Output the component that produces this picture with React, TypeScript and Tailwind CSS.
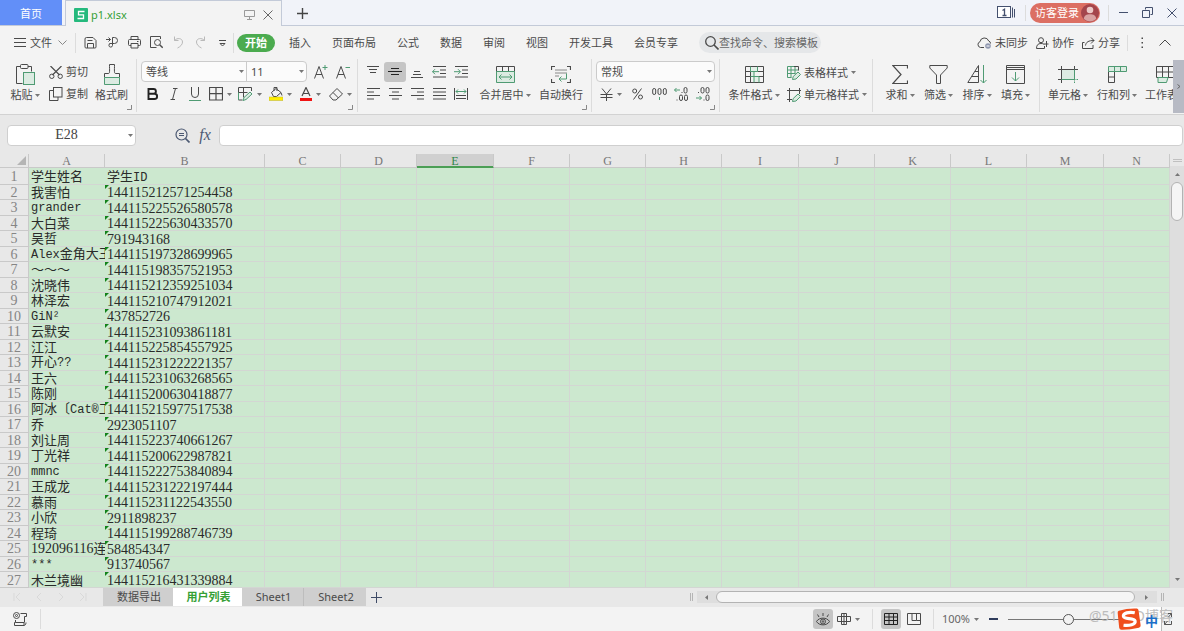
import React from "react";

type Kids = { children?: React.ReactNode };

const G = "#4f9b73";

function Ico({ w, h, children, className = "" }: Kids & { w: number; h: number; className?: string }) {
  return (
    <svg
      width={w}
      height={h}
      viewBox={`0 0 ${w} ${h}`}
      fill="none"
      stroke="currentColor"
      strokeWidth="1"
      className={`shrink-0 ${className}`}
      aria-hidden="true"
    >
      {children}
    </svg>
  );
}

function Caret({ className = "" }: { className?: string }) {
  return (
    <Ico w={5} h={3} className={`text-[#777] ${className}`}>
      <path d="M0 0h5L2.500 3z" fill="currentColor" stroke="none" />
    </Ico>
  );
}

function Sep({ className = "" }: { className?: string }) {
  return <span className={`w-px shrink-0 bg-[#dcdcdc] ${className}`} />;
}

function Corner() {
  return (
    <Ico w={5} h={5} className="absolute bottom-1 right-1 text-[#888]">
      <path d="M4.500 0v4.500H0" />
    </Ico>
  );
}

/* ---------- Title bar ---------- */

function TitleBar() {
  return (
    <header className="flex h-[26px] shrink-0 border-b border-[#c3cad8] bg-[#f1f3f9]">
      <button className="h-[25px] w-[62px] bg-[#628ff8] pt-[2px] text-white">首页</button>
      <div className="-mb-px ml-[3px] flex w-[217px] items-center border-x border-t border-[#c3cad8] bg-[#f3f3f3] pl-2 pr-2 pt-[2px]">
        <Ico w={14} h={14}>
          <rect width="14" height="14" rx="1" fill="#25b97d" stroke="none" />
          <path d="M10.500 3.500h-6v3.300h5v3.700h-6" stroke="#fff" strokeWidth="1.300" />
        </Ico>
        <span className="ml-[3px] flex-1 text-[#35a035]">p1.xlsx</span>
        <Ico w={11} h={11} className="text-[#999]">
          <path d="M.5 1.500h10v6h-10zM5.500 7.500v3M3 10.500h5" />
        </Ico>
        <button aria-label="关闭标签" className="ml-2 text-[#666]">
          <Ico w={10} h={10}>
            <path d="M.5.5l9 9M9.500.5l-9 9" />
          </Ico>
        </button>
      </div>
      <button aria-label="新建" className="flex w-10 items-center justify-center pt-[2px] text-[#444]">
        <Ico w={11} h={11}>
          <path d="M5.500 0v11M0 5.500h11" strokeWidth="1.400" />
        </Ico>
      </button>
      <div className="ml-auto flex items-center text-[#44506e]">
        <Ico w={19} h={13}>
          <rect x=".5" y=".5" width="13" height="11" fill="#fff" />
          <path d="M15.500 1.500v10M17.500 3v8.500" />
          <path d="M5.500 4.500l2-1.300V9.500M5.500 9.500h4" strokeWidth="1.300" />
        </Ico>
        <Sep className="ml-[9px] h-4" />
        <button className="ml-1 flex h-5 w-[70px] items-center justify-between rounded-full bg-[#dc6f63] pl-[5px] pr-px text-white">
          访客登录
          <Ico w={18} h={18}>
            <circle cx="9" cy="9" r="9" fill="#a4454c" stroke="none" />
            <circle cx="9" cy="6" r="3.300" fill="#ecc9c7" stroke="none" />
            <path d="M2.800 15C3 11.500 5.500 10.300 9 10.300s6 1.200 6.200 4.700A9 9 0 0 1 2.800 15z" fill="#d9a3a3" stroke="none" />
          </Ico>
        </button>
        <Sep className="ml-2 h-4" />
        <button aria-label="最小化" className="ml-[9px]">
          <Ico w={11} h={11}><path d="M1 5.500h9" /></Ico>
        </button>
        <button aria-label="还原" className="ml-[13px]">
          <Ico w={11} h={11}><path d="M3.500 2.500v-2h7v7h-2M.5 3.500h7v7h-7z" /></Ico>
        </button>
        <button aria-label="关闭" className="ml-[14px] mr-[7px]">
          <Ico w={10} h={10}><path d="M.5.5l9 9M9.500.5l-9 9" /></Ico>
        </button>
      </div>
    </header>
  );
}

/* ---------- Menu row ---------- */

const quick: { label: string; dim?: boolean; art: React.ReactNode }[] = [
  { label: "保存", art: <path d="M2.500 1.500h6.500l3 3v6.500q0 1-1 1h-9q-1 0-1-1v-8q0-1.500 1.500-1.500zM3.500 12V7.500h6V12M3.500 4.500h5" /> },
  { label: "输出", art: <path d="M0 3.500h4.500M2.500 1.500l2 2-2 2M6.500 1.500h2a3 3 0 0 1 0 6h-5M6.500 1.500v8a1.800 1.800 0 1 1-2-2" /> },
  { label: "打印", art: <path d="M3 3.500v-3h7v3M3 9.500H1.500q-1 0-1-1v-4q0-1 1-1h10q1 0 1 1v4q0 1-1 1H10M3 7.500h7v4.500H3zM9 5.500h1.500" /> },
  { label: "打印预览", art: <><path d="M10.500 3V.5H.5v11h6" /><circle cx="7.500" cy="6.500" r="3" /><path d="M9.700 8.700l3 3" strokeWidth="1.400" /></> },
  { label: "撤销", dim: true, art: <path d="M2.500.5v4h4M2.500 4.500C5 1.500 10.500 2 10.500 6c0 2.500-2 4.500-5 6" /> },
  { label: "恢复", dim: true, art: <path d="M10.500.5v4h-4M10.500 4.500C8 1.500 2.500 2 2.500 6c0 2.500 2 4.500 5 6" /> },
  { label: "自定义", art: <path d="M3 4.500h7M4 7.500h5L6.500 10z" /> },
];

const tabs = ["插入", "页面布局", "公式", "数据", "审阅", "视图", "开发工具", "会员专享"];

function MenuRow() {
  return (
    <nav className="flex h-[33px] shrink-0 items-center">
      <button className="ml-[14px] flex items-center">
        <Ico w={12} h={9}><path d="M0 .5h12M0 4.500h12M0 8.500h12" /></Ico>
        <span className="ml-1">文件</span>
        <Ico w={9} h={5} className="ml-[6px] text-[#888]"><path d="M.5.5l4 4 4-4" /></Ico>
      </button>
      <Sep className="ml-2 mr-[3px] h-5" />
      {quick.map((q) => (
        <button
          key={q.label}
          aria-label={q.label}
          className={`flex w-[22px] justify-center ${q.dim ? "text-[#b9b9b9]" : "text-[#4c4c4c]"}`}
        >
          <Ico w={13} h={13}>{q.art}</Ico>
        </button>
      ))}
      <Sep className="h-5" />
      <button className="ml-[3px] mr-[14px] h-[18px] w-[38px] rounded-full bg-[#4bab4f] font-bold text-white">开始</button>
      <div className="flex gap-[21px] whitespace-nowrap">
        {tabs.map((t) => (
          <button key={t}>{t}</button>
        ))}
      </div>
      <label className="ml-[21px] flex h-[21px] w-[122px] items-center rounded-full bg-[#e5e7e9] pl-[6px]">
        <Ico w={14} h={14}>
          <circle cx="5.500" cy="5.500" r="4.800" strokeWidth="1.300" />
          <path d="M9 9l4.500 4.500" strokeWidth="1.600" />
        </Ico>
        <input
          aria-label="查找"
          placeholder="查找命令、搜索模板"
          className="w-full min-w-0 bg-transparent outline-none placeholder:text-[#666] placeholder:opacity-100"
        />
      </label>
      <div className="ml-auto flex items-center whitespace-nowrap">
        <button className="flex items-center gap-[3px]">
          <Ico w={15} h={12}>
            <path d="M7 10.500H3.500a3 3 0 0 1-.5-5.800A4.500 4.500 0 0 1 11.700 4a2.500 2.500 0 0 1 1.800 2.500" />
            <circle cx="11" cy="9" r="2.800" fill="#9098b0" stroke="none" />
            <path d="M9.500 9h3" stroke="#fff" />
          </Ico>
          未同步
        </button>
        <button className="ml-2 flex items-center gap-[3px]">
          <Ico w={13} h={12}>
            <circle cx="5" cy="3.200" r="2.500" />
            <path d="M.5 11.500C.5 8 2 6.500 5 6.500s3 1 3 1M.5 11.500h8V9M10.500 4v6M7.500 7h5" />
          </Ico>
          协作
        </button>
        <button className="ml-2 flex items-center gap-[3px]">
          <Ico w={13} h={12}>
            <path d="M2.500 5.500h-2v6h10.500V8M3.500 8.500C4 5 6.500 3.500 12 3.500M9 .5l3 3-3 3" />
          </Ico>
          分享
        </button>
        <Sep className="ml-[7px] h-4" />
        <button aria-label="更多" className="ml-[13px]">
          <Ico w={3} h={11}><path d="M.5.5h1.500v1.500H.5zM.5 5h1.500v1.500H.5zM.5 9.500h1.500V11H.5z" fill="currentColor" stroke="none" /></Ico>
        </button>
        <button aria-label="收起功能区" className="ml-[15px] mr-[13px]">
          <Ico w={12} h={7}><path d="M.5 6.500L6 1l5.500 5.500" /></Ico>
        </button>
      </div>
    </nav>
  );
}

/* ---------- Ribbon ---------- */

function Big({ label, caret, width, children }: Kids & { label: string; caret?: boolean; width: string }) {
  return (
    <button className={`-mt-px flex shrink-0 flex-col items-center whitespace-nowrap ${width}`}>
      <span className="flex h-[26px] items-center">{children}</span>
      <span className="flex h-4 items-center gap-[2px]">
        {label}
        {caret && <Caret />}
      </span>
    </button>
  );
}

function Small({ label, active, caret, children, width = "w-[22px]" }: Kids & { label: string; active?: boolean; caret?: boolean; width?: string }) {
  return (
    <button
      aria-label={label}
      className={`flex h-5 shrink-0 items-center justify-center gap-1 rounded-[3px] ${width} ${active ? "bg-[#c5c5c5]" : ""}`}
    >
      {children}
      {caret && <Caret />}
    </button>
  );
}

function Pick({ label, value, className }: { label: string; value: string; className: string }) {
  return (
    <span className={`relative flex items-center ${className}`}>
      <select aria-label={label} className="h-full w-full appearance-none bg-transparent pl-1 outline-none">
        <option>{value}</option>
      </select>
      <Caret className="pointer-events-none absolute right-[2px]" />
    </span>
  );
}

function Ribbon() {
  return (
    <div className="flex h-[56px] shrink-0 border-b border-[#d2d2d2]">
      <div className="flex min-w-0 flex-1 overflow-hidden">
        <section className="relative flex w-[136px] shrink-0 pl-[5px] pt-[3px]">
          <Big label="粘贴" caret width="w-[40px]">
            <Ico w={19} h={21}>
              <path d="M4.500 2.500h-4v17h6M12 2.500h3.500v5" />
              <rect x="4.500" y=".5" width="7.500" height="4" rx="1" />
              <rect x="7.500" y="8.500" width="11" height="12" fill="#dcebe2" stroke={G} />
            </Ico>
          </Big>
          <div className="flex w-[46px] flex-col gap-[2px] pl-1">
            <button className="flex h-5 items-center gap-[3px] whitespace-nowrap">
              <Ico w={14} h={13}>
                <path d="M1.500 0l9 9M12.500 0l-9 9" strokeWidth="1.200" />
                <circle cx="2.800" cy="10.300" r="2.200" /><circle cx="11.200" cy="10.300" r="2.200" />
              </Ico>
              剪切
            </button>
            <button className="flex h-5 items-center gap-[3px] whitespace-nowrap">
              <Ico w={14} h={14}>
                <rect x="4.500" y=".5" width="8.500" height="9.500" />
                <path d="M4.500 3.500h-4v10h8.500v-3.500" />
              </Ico>
              复制
            </button>
          </div>
          <Big label="格式刷" width="w-[41px]">
            <Ico w={16} h={21}>
              <path d="M.5 13.500V9.500h4c1.500 0 1-3 1-9h5c0 6-.5 9 1 9h4v4" />
              <path d="M.5 13.500h15v7H.5z" fill="#dcebe2" stroke={G} />
            </Ico>
          </Big>
          <Corner />
        </section>
        <Sep className="h-[53px]" />

        <section className="relative w-[220px] shrink-0 pl-1 pt-[2px]">
          <div className="flex items-center">
            <div className="mr-[3px] flex h-[21px] w-[166px] rounded-[4px] border border-[#cbcbcb] bg-[#fbfbfb]">
              <Pick label="字体" value="等线" className="w-[105px] border-r border-[#cbcbcb]" />
              <Pick label="字号" value="11" className="flex-1" />
            </div>
            <Small label="增大字号">
              <Ico w={14} h={14}><path d="M.5 13.500l4.500-12 4.500 12M2 9.500h6" /><path d="M11 0v5M8.500 2.500h5" stroke={G} /></Ico>
            </Small>
            <Small label="减小字号">
              <Ico w={14} h={14}><path d="M.5 13.500l4.500-12 4.500 12M2 9.500h6" /><path d="M9.500 2.500h4.500" stroke={G} /></Ico>
            </Small>
          </div>
          <div className="mt-[2px] flex items-center">
            <Small label="加粗"><Ico w={11} h={12}><path d="M1.500 1h5a2.300 2.300 0 0 1 0 4.800h-5zM1.500 5.800h6a2.600 2.600 0 0 1 0 5.200h-6z" stroke="#222" strokeWidth="1.900" /></Ico></Small>
            <Small label="倾斜" width="w-[21px]"><Ico w={8} h={12}><path d="M3 .5h4.500M.5 11.500H5M5.500.5l-3 11" /></Ico></Small>
            <Small label="下划线" width="w-[21px]"><Ico w={12} h={14}><path d="M2.500 0v7a3.500 3.500 0 0 0 7 0V0" /><path d="M0 13.500h12" stroke={G} /></Ico></Small>
            <Small label="边框" caret width="w-[30px]"><Ico w={14} h={14}><path d="M.5.5h13v12.500H.5zM7 .5v12.500M.5 6.700h13" strokeWidth="1.200" /></Ico></Small>
            <Small label="绘制边框" caret width="w-[30px]">
              <Ico w={15} h={14}><path d="M13.500 4V.5H.5V13h4M5.500.5v10M.5 5.500h9" /><path d="M.5 13V5.500M5 13.500l1-3L12 5l2 2-6 5.500z" fill="#dcebe2" stroke={G} /></Ico>
            </Small>
            <Small label="填充颜色" caret width="w-[30px]">
              <Ico w={14} h={14}><path d="M2.500 5.500L7 1.500l5 4-4.500 4h-3zM5 4V.5h3V4M12 5.500l1 3" /><path d="M0 10h14v3.500H0z" fill="#ffef00" stroke="#b9ae30" strokeWidth=".5" /></Ico>
            </Small>
            <Small label="字体颜色" caret width="w-[30px]">
              <Ico w={12} h={14}><path d="M2 9L6 .5 10 9M3.500 6.500h5" strokeWidth="1.200" /><path d="M0 11h12v3H0z" fill="#f01414" stroke="none" /></Ico>
            </Small>
            <Small label="清除" caret width="w-[30px]">
              <Ico w={14} h={13}><path d="M.5 8L8 .5 13.500 6 7 12H4zM4 4.500l5.500 5.500" /></Ico>
            </Small>
          </div>
          <Corner />
        </section>
        <Sep className="h-[53px]" />

        <section className="relative flex w-[233px] shrink-0 pl-1 pt-[3px]">
          <div className="flex w-[110px] flex-wrap content-start gap-y-[2px]">
            <Small label="顶端对齐"><Ico w={12} h={12}><path d="M0 .5h12M2 3.500h8M3 6.500h6" /></Ico></Small>
            <Small label="垂直居中" active><Ico w={14} h={12}><path d="M3 2.500h8M0 5.500h14M3 8.500h8" stroke="#222" /></Ico></Small>
            <Small label="底端对齐"><Ico w={12} h={12}><path d="M3 5.500h6M2 8.500h8M0 11.500h12" /></Ico></Small>
            <Small label="减少缩进"><Ico w={14} h={12}><path d="M1 .5h13M8 4h6M8 7.500h6M1 11h13" /><path d="M7 5.700H.5M3 3.200L.5 5.700 3 8.200" stroke={G} /></Ico></Small>
            <Small label="增加缩进"><Ico w={14} h={12}><path d="M1 .5h13M8 4h6M8 7.500h6M1 11h13" /><path d="M0 5.700h6M4 3.200l2.500 2.500L4 8.200" stroke={G} /></Ico></Small>
            <Small label="左对齐"><Ico w={13} h={12}><path d="M0 .5h13M0 4h7M0 7.500h13M0 11h7" /></Ico></Small>
            <Small label="居中"><Ico w={13} h={12}><path d="M0 .5h13M3 4h7M0 7.500h13M3 11h7" /></Ico></Small>
            <Small label="右对齐"><Ico w={13} h={12}><path d="M0 .5h13M6 4h7M0 7.500h13M6 11h7" /></Ico></Small>
            <Small label="两端对齐"><Ico w={13} h={12}><path d="M0 .5h13M0 4h13M0 7.500h13M0 11h13" /></Ico></Small>
            <Small label="分散对齐"><Ico w={14} h={12}><path d="M.5 0v12M13.500 0v12M2 7.500h10M2 10.500h10" /><path d="M2 3.500h10M4 1.500l-2 2 2 2M10 1.500l2 2-2 2" stroke={G} /></Ico></Small>
          </div>
          <Big label="合并居中" caret width="w-[66px]">
            <Ico w={19} h={17}>
              <path d="M.5 7V.5h18V7M6.500.5v5M12.500.5v5" />
              <path d="M.5 5.500h18v11H.5z" fill="#dcebe2" stroke={G} />
              <path d="M3 11h13M5.500 8.500L3 11l2.500 2.500M13.500 8.500L16 11l-2.500 2.500" stroke={G} />
            </Ico>
          </Big>
          <Big label="自动换行" width="w-[46px]">
            <Ico w={20} h={17}>
              <path d="M.5 4V.5H4M16 .5h3.500V4M.5 13v3.500H4M16 16.500h3.500V13" strokeWidth="1.200" />
              <path d="M4 4h12M4 7h12M4 10h4" stroke="#888" />
              <path d="M15.500 7.500V13H8M10.500 10.500L8 13l2.500 2.500" stroke={G} />
            </Ico>
          </Big>
          <Corner />
        </section>
        <Sep className="h-[53px]" />

        <section className="relative w-[127px] shrink-0 pl-1 pt-[2px]">
          <div className="flex h-[21px] w-[119px] rounded-[4px] border border-[#cbcbcb] bg-[#fbfbfb]">
            <Pick label="数字格式" value="常规" className="flex-1" />
          </div>
          <div className="mt-[2px] flex items-center">
            <Small label="货币" caret width="w-[30px]"><Ico w={13} h={13}><path d="M2 .5l4.500 5.500L11 .5M6.500 6v7M.5 6.500h12M.5 9.500h12" /></Ico></Small>
            <Small label="百分比"><Ico w={11} h={12}><path d="M9.500.5l-8 11" /><circle cx="2.700" cy="3" r="2" /><circle cx="8.500" cy="9" r="2" /></Ico></Small>
            <Small label="千位分隔"><Ico w={15} h={13}><rect x=".7" y=".5" width="3" height="6" rx="1.500" /><rect x="6" y=".5" width="3" height="6" rx="1.500" /><rect x="11.300" y=".5" width="3" height="6" rx="1.500" /><path d="M7.500 9v3" stroke={G} /></Ico></Small>
            <Small label="增加小数位"><Ico w={14} h={14}><path d="M6 3H.5M2.500 1L.5 3l2 2" stroke={G} /><rect x="10" y=".5" width="3" height="5.500" rx="1.500" /><rect x="5.500" y="8" width="3" height="5.500" rx="1.500" /><rect x="10.500" y="8" width="3" height="5.500" rx="1.500" /><path d="M8 5v1M3 12.500v1" /></Ico></Small>
            <Small label="减少小数位"><Ico w={14} h={14}><path d="M0 11h5.500M3.500 9l2 2-2 2" stroke={G} /><rect x="5" y=".5" width="3" height="5.500" rx="1.500" /><rect x="10" y=".5" width="3" height="5.500" rx="1.500" /><rect x="10" y="8" width="3" height="5.500" rx="1.500" /><path d="M2.500 5v1M8 12.500v1" /></Ico></Small>
          </div>
          <Corner />
        </section>
        <Sep className="h-[53px]" />

        <section className="flex w-[152px] shrink-0 pl-1 pt-[3px]">
          <Big label="条件格式" caret width="w-[60px]">
            <Ico w={19} h={17}>
              <path d="M6.500.5h6v5h-6zM5 5.500h4v5H5zM9 10.500h5v6H9z" fill="#e3f0e8" stroke="none" />
              <path d="M.5.5h18v16H.5zM.5 5.500h5M12.500 5.500h6M.5 10.500h5M14 10.500h4.500M5.500 5.500v11" />
              <path d="M5.500.5v5h7V.5M9 5.500v5h5v6M5.500 10.500H9v6" stroke={G} />
            </Ico>
          </Big>
          <div className="flex flex-col gap-px pl-[3px]">
            <button className="flex h-[21px] items-center gap-[3px] whitespace-nowrap">
              <Ico w={14} h={14}>
                <path d="M.5 11.500V.5h8M.5 4h11M4 .5v11M8 .5v7M.5 7.500h8M.5 11.500h4" stroke={G} />
                <path d="M7 .5h4.500v4" />
                <path d="M5.500 13.500l.7-3L11 6l2.500 2.500L9 13z" fill="#dcebe2" stroke={G} />
              </Ico>
              表格样式<Caret />
            </button>
            <button className="flex h-[21px] items-center gap-[3px] whitespace-nowrap">
              <Ico w={14} h={14}>
                <path d="M0 2.500h14M2.500 0v14M12.500 0v6M0 11.500h5" />
                <path d="M5.500 13.500l.7-3L11 6l2.500 2.500L9 13z" fill="#dcebe2" stroke={G} />
              </Ico>
              单元格样式<Caret />
            </button>
          </div>
        </section>
        <Sep className="h-[53px]" />

        <section className="flex w-[166px] shrink-0 pl-2 pt-[3px]">
          <Big label="求和" caret width="w-[38px]">
            <Ico w={16} h={19}><path d="M15.500 3.500V.5H.8L9 9.500.8 18.500h14.700v-3" strokeWidth="1.200" /></Ico>
          </Big>
          <Big label="筛选" caret width="w-[39px]">
            <Ico w={19} h={19}><path d="M.8.5h17.400v2.500L11.500 10v8.500h-4V10L.8 3z" /></Ico>
          </Big>
          <Big label="排序" caret width="w-[38px]">
            <Ico w={20} h={19}><path d="M.8 17.500L11.500.5v17zM8 6.500h3.500M5 11.500h6.500" /><path d="M16.500 0v18M13.500 15l3 3 3-3" stroke={G} /></Ico>
          </Big>
          <Big label="填充" caret width="w-[39px]">
            <Ico w={19} h={19}><path d="M.5.5h18v18H.5zM.5 4.500h18M.5 2.500h18" /><path d="M9.500 7v9M6 12.500L9.500 16l3.500-3.500" stroke={G} /></Ico>
          </Big>
        </section>
        <Sep className="h-[53px]" />

        <section className="flex shrink-0 pl-[3px] pt-[3px]">
          <Big label="单元格" caret width="w-[50px]">
            <Ico w={20} h={17}>
              <path d="M3.500 3.500h13v10h-13z" fill="#dcebe2" stroke={G} />
              <path d="M0 3.500h20M3.500 0v17M0 13.500h3.500M16.500 0v3.500" /><path d="M3.500 13.500h16.500M16.500 3.500V17" stroke={G} strokeDasharray="2 1" />
            </Ico>
          </Big>
          <Big label="行和列" caret width="w-[48px]">
            <Ico w={19} h={17}>
              <path d="M.5 5.500h6v11h-6zM.5 11h6" /><path d="M.5.5h18v5H.5zM6.500.5v5M12.500.5v5" fill="#dcebe2" stroke={G} />
            </Ico>
          </Big>
          <Big label="工作表" caret width="w-[48px]">
            <Ico w={19} h={17}>
              <path d="M.5.5h18v11H.5zM.5 6h18M6.500.5v11M12.500.5v11" /><path d="M2 11.500h10l-1.500 5H2z" fill="#dcebe2" stroke={G} />
            </Ico>
          </Big>
        </section>
      </div>
      <button aria-label="向右滚动功能区" className="mt-px flex h-[53px] w-[11px] shrink-0 items-center justify-center bg-[#b7bac4] text-[#666]">
        <Ico w={4} h={5}><path d="M.5.5l2.500 2-2.500 2" /></Ico>
      </button>
    </div>
  );
}

/* ---------- Formula bar ---------- */

function FormulaBar() {
  return (
    <div className="flex h-[39px] shrink-0 items-center pl-[7px] pr-px pt-px">
      <div className="relative flex h-[21px] w-[129px] items-center">
        <input
          aria-label="名称框"
          defaultValue="E28"
          className="h-full w-full rounded-[4px] border border-[#cfcfcf] bg-white pr-[10px] text-center font-['Liberation_Serif',serif] text-[14px] text-[#444] outline-none"
        />
        <Caret className="pointer-events-none absolute right-[3px]" />
      </div>
      <button aria-label="浏览" className="ml-[39px] text-[#4d5a73]">
        <Ico w={15} h={15}>
          <circle cx="6.500" cy="6.500" r="5.500" strokeWidth="1.200" />
          <path d="M10.500 10.500l4 4" strokeWidth="1.700" />
          <path d="M4 5.500h5M4 7.500h5" />
        </Ico>
      </button>
      <button aria-label="插入函数" className="ml-2 w-[14px] font-['Liberation_Serif',serif] text-[16px] italic leading-4 text-[#4d5a73]">fx</button>
      <input aria-label="编辑栏" className="ml-[7px] h-[21px] min-w-0 flex-1 rounded-[4px] border border-[#cfcfcf] bg-white px-2 outline-none" />
    </div>
  );
}

/* ---------- Sheet ---------- */

const columns = [
  { name: "A", width: "w-[76px]" },
  { name: "B", width: "w-[160px]" },
  { name: "C", width: "w-[76px]" },
  { name: "D", width: "w-[76px]" },
  { name: "E", width: "w-[77px]" },
  { name: "F", width: "w-[76px]" },
  { name: "G", width: "w-[76px]" },
  { name: "H", width: "w-[76px]" },
  { name: "I", width: "w-[77px]" },
  { name: "J", width: "w-[76px]" },
  { name: "K", width: "w-[76px]" },
  { name: "L", width: "w-[76px]" },
  { name: "M", width: "w-[77px]" },
  { name: "N", width: "w-auto" },
];

const rows: [string, string][] = [
  ["学生姓名", "学生ID"],
  ["我害怕", "144115212571254458"],
  ["grander", "144115225526580578"],
  ["大白菜", "144115225630433570"],
  ["吴哲", "791943168"],
  ["Alex金角大王", "144115197328699965"],
  ["～～～", "144115198357521953"],
  ["沈晓伟", "144115212359251034"],
  ["林泽宏", "144115210747912021"],
  ["GiN²", "437852726"],
  ["云默安", "144115231093861181"],
  ["江江", "144115225854557925"],
  ["开心??", "144115231222221357"],
  ["王六", "144115231063268565"],
  ["陈刚", "144115200630418877"],
  ["阿冰〔Cat®工", "144115215977517538"],
  ["乔", "2923051107"],
  ["刘让周", "144115223740661267"],
  ["丁光祥", "144115200622987821"],
  ["mmnc", "144115222753840894"],
  ["王成龙", "144115231222197444"],
  ["慕雨", "144115231122543550"],
  ["小欣", "2911898237"],
  ["程琦", "144115199288746739"],
  ["192096116连", "584854347"],
  ["***", "913740567"],
  ["木兰境幽", "144115216431339884"],
];

/* Digits are set in the serif face, other Latin runs in the monospaced one. */
function CellText({ text }: { text: string }) {
  return (
    <>
      {text.split(/([\x20-\xff]+)/).filter(Boolean).map((run, i) => {
        if (/^\d+$/.test(run)) return <span key={i} className="font-['Liberation_Serif',serif] text-[14px]">{run}</span>;
        if (/^[\x20-\xff]+$/.test(run)) return <span key={i} className="font-['Liberation_Mono',monospace] text-[12px]">{run}</span>;
        return <span key={i}>{run}</span>;
      })}
    </>
  );
}

function Sheet() {
  return (
    <div className="flex min-h-0 flex-1">
      <div className="min-w-0 flex-1 overflow-hidden">
        <table className="h-full w-full table-fixed border-separate border-spacing-0 bg-[#cce8cf] font-['Noto_Sans_CJK_SC',sans-serif] text-[13px] leading-[10px] text-[#2a2a2a]">
          <colgroup>
            <col className="w-[29px]" />
            {columns.map((c) => <col key={c.name} className={c.width} />)}
          </colgroup>
          <thead>
            <tr className="h-[14px] bg-[#e8e8e8] font-['Liberation_Serif',serif] text-[12px] text-[#777]">
              <th className="border-b border-r border-[#c9c9c9] p-0">
                <Ico w={9} h={9} className="ml-auto mr-[2px]"><path d="M9 0v9H0z" fill="#b5b5b5" stroke="none" /></Ico>
              </th>
              {columns.map((c) => (
                <th
                  key={c.name}
                  scope="col"
                  className={`border-b border-r p-0 font-normal ${
                    c.name === "E"
                      ? "border-b-[#4b9e55] border-r-[#c9c9c9] bg-[#d0d0d0] text-[#31884a] shadow-[inset_0_-1px_0_#4b9e55]"
                      : "border-[#c9c9c9]"
                  }`}
                >
                  {c.name}
                </th>
              ))}
            </tr>
          </thead>
          <tbody>
            {rows.map(([name, id], r) => (
              <tr key={r}>
                <th scope="row" className="border-b border-r border-[#c9c9c9] bg-[#e8e8e8] p-0 pt-[2px] font-['Liberation_Serif',serif] text-[14px] font-normal text-[#858585]">
                  {r + 1}
                </th>
                <td className="overflow-hidden whitespace-nowrap border-b border-[#d3d6d3] p-0 pl-[2px]"><CellText text={name} /></td>
                <td className="relative overflow-hidden whitespace-nowrap border-b border-r border-[#d3d6d3] p-0 pl-[2px] pt-[2px]">
                  {r > 0 && (
                    <Ico w={4} h={4} className="absolute left-0 top-0"><path d="M0 0h4L0 4z" fill="#12821a" stroke="none" /></Ico>
                  )}
                  <CellText text={id} />
                </td>
                {columns.slice(2).map((c) => (
                  <td key={c.name} className="border-b border-r border-[#d3d6d3] p-0" />
                ))}
              </tr>
            ))}
          </tbody>
        </table>
      </div>
      <div className="flex w-[14px] shrink-0 flex-col items-center bg-[#dedede]">
        <div className="flex h-[12px] w-full items-center justify-center bg-[#e8e8e8] text-[#c0c0c0]">
          <Ico w={9} h={3}><path d="M0 .5h9M0 2.500h9" /></Ico>
        </div>
        <button aria-label="向上滚动" className="flex h-[16px] items-center text-[#777]">
          <Ico w={5} h={3}><path d="M0 3h5L2.500 0z" fill="currentColor" stroke="none" /></Ico>
        </button>
        <div className="h-[39px] w-[12px] rounded-full border border-[#b3b3b3] bg-[#f5f5f5]" />
        <button aria-label="向下滚动" className="mt-auto flex h-[18px] items-center text-[#777]">
          <Caret />
        </button>
      </div>
    </div>
  );
}

/* ---------- Sheet tabs and status bar ---------- */

const nav = [
  { label: "第一张", d: "M1 0v8M7 0L3 4l4 4" },
  { label: "上一张", d: "M6 0L2 4l4 4" },
  { label: "下一张", d: "M2 0l4 4-4 4" },
  { label: "最后一张", d: "M7 0v8M1 0l4 4-4 4" },
];

function SheetTabs() {
  return (
    <div className="flex h-[19px] shrink-0 items-start bg-[#e8e8e8] pb-px">
      <div className="flex h-full w-[103px] items-center gap-[14px] pl-[13px] text-[#d9d9d9]">
        {nav.map((n) => (
          <button key={n.label} aria-label={n.label}><Ico w={8} h={8}><path d={n.d} /></Ico></button>
        ))}
      </div>
      <button className="h-[18px] w-[70px] bg-[#cfcfcf] pl-[2px]">数据导出</button>
      <button className="h-[18px] w-[69px] bg-white pl-[2px] font-bold text-[#35a035]">用户列表</button>
      <button className="h-[18px] w-[62px] border-r border-[#bdbdbd] bg-[#cfcfcf] pl-[2px]">Sheet1</button>
      <button className="h-[18px] w-[62px] bg-[#cfcfcf] pl-[2px]">Sheet2</button>
      <button aria-label="添加工作表" className="flex h-[18px] w-5 items-center justify-center text-[#3f4b66]">
        <Ico w={11} h={11}><path d="M5.500 0v11M0 5.500h11" /></Ico>
      </button>
      <div className="ml-auto flex h-[18px] w-[494px] items-center text-[#777]">
        <Ico w={3} h={8} className="mr-1 text-[#b5b5b5]"><path d="M.5 0v8M2.500 0v8" /></Ico>
        <div className="flex h-3 flex-1 items-center bg-[#dedede]">
          <button aria-label="向左滚动" className="flex w-[19px] justify-center"><Ico w={3} h={5}><path d="M3 0v5L0 2.500z" fill="currentColor" stroke="none" /></Ico></button>
          <div className="h-[12px] flex-1 rounded-full border border-[#b3b3b3] bg-[#f5f5f5]" />
          <button aria-label="向右滚动" className="flex w-[22px] justify-center"><Ico w={3} h={5}><path d="M0 0v5l3-2.500z" fill="currentColor" stroke="none" /></Ico></button>
        </div>
        <Ico w={3} h={8} className="ml-1 mr-5 text-[#b5b5b5]"><path d="M.5 0v8M2.500 0v8" /></Ico>
      </div>
    </div>
  );
}

function StatusBar() {
  return (
    <footer className="relative flex h-6 shrink-0 items-center bg-[#f3f3f3]">
      <button aria-label="宏" className="ml-[13px] mr-[13px]">
        <Ico w={14} h={14}>
          <circle cx="3.500" cy="3.500" r="3" /><circle cx="3.500" cy="3.500" r="1" />
          <path d="M7.500 1.500h6v3h-2v6M2.500 8v2.500h-1v3h9.500v-3H2.500M13 10.500c0 2-1 3-2.500 3" />
        </Ico>
      </button>
      <Sep className="h-5" />
      <div className="ml-auto flex items-center">
        <button aria-label="护眼模式" className="flex h-5 w-5 items-center justify-center rounded-[3px] bg-[#c5c5c5]">
          <Ico w={14} h={13}>
            <path d="M.5 8.500C3 4 11 4 13.500 8.500 11 13 3 13 .5 8.500zM7 3V0M3 4L1.500 1.500M11 4l1.500-2.500" />
            <circle cx="7" cy="8.500" r="2.500" /><circle cx="7" cy="8.500" r=".8" />
          </Ico>
        </button>
        <button aria-label="阅读模式" className="ml-[4px] flex items-center gap-1">
          <Ico w={14} h={12}><path d="M4.500.5h5v11h-5zM.5 3.500h13v5H.5zM7 .5v11" /></Ico>
          <Caret />
        </button>
        <Sep className="ml-3 h-5" />
        <button aria-label="普通视图" className="ml-2 flex h-5 w-5 items-center justify-center rounded-[3px] bg-[#c5c5c5] text-[#222]">
          <Ico w={14} h={12}><path d="M.5.5h13v11H.5zM.5 4h13M.5 7.500h13M5 .5v11M9.500.5v11" /></Ico>
        </button>
        <button aria-label="分页预览" className="ml-[6px]">
          <Ico w={14} h={12}><path d="M.5.5h13v11H.5zM5 .5v7h4.500V.5M9.500 7.500h4" /></Ico>
        </button>
        <Sep className="ml-3 h-5" />
        <button className="ml-2 flex items-center gap-1 text-[#666]">100%<Caret /></button>
        <button aria-label="缩小" className="ml-[10px] text-[#2f3c5c]"><Ico w={9} h={2}><path d="M0 1h9" strokeWidth="2" /></Ico></button>
        <input
          type="range"
          aria-label="缩放"
          min={0}
          max={100}
          defaultValue={50}
          className="ml-[10px] mr-14 h-3 w-[120px] appearance-none bg-transparent bg-[linear-gradient(#777,#777)] bg-[length:100%_1px] bg-center bg-no-repeat [&::-webkit-slider-thumb]:h-[11px] [&::-webkit-slider-thumb]:w-[11px] [&::-webkit-slider-thumb]:appearance-none [&::-webkit-slider-thumb]:rounded-full [&::-webkit-slider-thumb]:border [&::-webkit-slider-thumb]:border-[#555] [&::-webkit-slider-thumb]:bg-[#f3f3f3]"
        />
      </div>
      <div className="pointer-events-none absolute bottom-0 right-0 h-6 w-[96px]">
        <div className="absolute left-[42px] top-0 h-6 w-[31px] bg-white/90 shadow-[1px_0_0_#bbb]" />
        <span className="absolute left-[1px] top-0 whitespace-nowrap text-[14px] leading-[18px] text-[#bdbdbd]">@51CTO博客</span>
        <Ico w={24} h={24} className="absolute bottom-0 left-[29px]">
          <g transform="rotate(-7 12 12)">
            <path d="M3 2.500Q12 1 21 2.500q1.500.3 1.500 2l.3 15q0 2-2 2.300-8.800 1.200-17.600 0-2-.3-2-2.300l.3-15q0-1.700 1.500-2z" fill="#f04e1d" stroke="none" />
            <path d="M18.500 6.500C13 4.500 6.500 5.500 6.800 8.800c.4 3.400 10.700 2.200 11 6 .3 3.500-6.500 4.200-12 2.700" stroke="#fff" strokeWidth="3.200" />
          </g>
        </Ico>
        <span className="absolute left-[57px] top-[6px] text-[13px] font-bold leading-4 text-[#1b6fc9]">中</span>
        <Ico w={8} h={12} className="absolute left-[76px] top-[6px] text-[#555]"><path d="M4 .5h3.500V4M7.500.5L4.500 4M4 11.500H.5V8M.5 11.500L3.500 8M4 11.500h3.500V8" /></Ico>
      </div>
    </footer>
  );
}

export default function App() {
  return (
    <main className="flex h-screen min-h-[560px] flex-col overflow-hidden bg-[#e8e8e8] font-['Noto_Sans','Noto_Sans_CJK_SC',sans-serif] text-[11px] leading-4 text-[#4a4a4a]">
      <TitleBar />
      <div className="shrink-0 bg-[#f3f3f3]">
        <MenuRow />
        <Ribbon />
      </div>
      <FormulaBar />
      <Sheet />
      <SheetTabs />
      <StatusBar />
    </main>
  );
}
